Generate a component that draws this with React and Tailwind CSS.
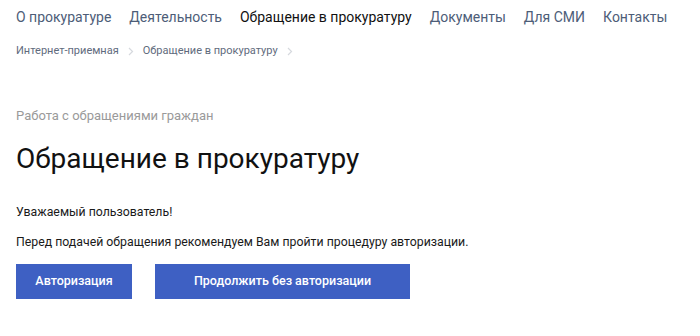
import React from "react";

const navItems = [
  { label: "О прокуратуре" },
  { label: "Деятельность" },
  { label: "Обращение в прокуратуру", active: true },
  { label: "Документы" },
  { label: "Для СМИ" },
  { label: "Контакты" },
];

function Chevron() {
  return (
    <svg width="6" height="9" viewBox="0 0 6 9" className="mx-[9px]">
      <path d="M1 1l3.5 3.5L1 8" fill="none" stroke="#d6d9de" strokeWidth="1.2" />
    </svg>
  );
}

export default function App() {
  return (
    <div className="w-[700px] h-[336px] bg-white overflow-hidden font-['Roboto',sans-serif]">
      <nav className="flex items-center gap-[18px] pl-[16px] pt-[6px] h-[29px] text-[14px]">
        {navItems.map((item) => (
          <a
            key={item.label}
            className={item.active ? "text-[#111111] whitespace-nowrap" : "text-[#4d5d78] whitespace-nowrap"}
          >
            {item.label}
          </a>
        ))}
      </nav>

      <div className="flex items-center pl-[16px] mt-[14px] text-[11px] text-[#5f6b7d]">
        <span>Интернет-приемная</span>
        <Chevron />
        <span>Обращение в прокуратуру</span>
        <Chevron />
      </div>

      <div className="pl-[16px] mt-[46px] text-[13px] text-[#9a9a9a]">Работа с обращениями граждан</div>

      <h1 className="pl-[16px] mt-[17px] text-[28px] leading-[34px] text-[#111111]">Обращение в прокуратуру</h1>

      <p className="pl-[16px] mt-[27px] text-[12.3px] text-[#1a1a1a]">Уважаемый пользователь!</p>
      <p className="pl-[16px] mt-[12px] text-[12.3px] text-[#1a1a1a]">
        Перед подачей обращения рекомендуем Вам пройти процедуру авторизации.
      </p>

      <div className="flex gap-[23px] pl-[16px] mt-[12px]">
        <button className="w-[116px] h-[35px] bg-[#3e60c3] text-white text-[12.5px] font-medium">Авторизация</button>
        <button className="w-[255px] h-[35px] bg-[#3e60c3] text-white text-[12.5px] font-medium">
          Продолжить без авторизации
        </button>
      </div>
    </div>
  );
}
